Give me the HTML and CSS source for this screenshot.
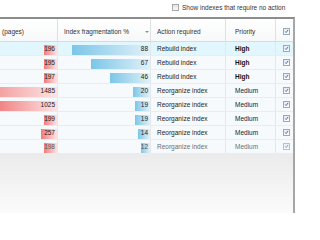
FILE: index.html
```html
<!DOCTYPE html>
<html>
<head>
<meta charset="utf-8">
<link rel="stylesheet" href="styles.css">
</head>
<body>
<div class="toolbar">
  <span class="cb cb-off"></span>
  <span class="toolbar-label">Show indexes that require no action</span>
</div>
<div class="grid">
  <div class="row head">
    <div class="cell c1">(pages)</div>
    <div class="cell c2">Index fragmentation %<span class="sort"></span></div>
    <div class="cell c3">Action required</div>
    <div class="cell c4">Priority</div>
    <div class="cell c5"><span class="cb cb-on"><svg viewBox="0 0 7 7"><path d="M1.6 3.4 L3 5 L5.6 1.4"/></svg></span></div>
  </div>
  <div class="row hl">
    <div class="cell c1 num red" style="--w:13px">196</div>
    <div class="cell c2 num blue" style="--w:78px">88</div>
    <div class="cell c3">Rebuild index</div>
    <div class="cell c4 high">High</div>
    <div class="cell c5"><span class="cb cb-on"><svg viewBox="0 0 7 7"><path d="M1.6 3.4 L3 5 L5.6 1.4"/></svg></span></div>
  </div>
  <div class="row">
    <div class="cell c1 num red" style="--w:13px">195</div>
    <div class="cell c2 num blue" style="--w:59px">67</div>
    <div class="cell c3">Rebuild index</div>
    <div class="cell c4 high">High</div>
    <div class="cell c5"><span class="cb cb-on"><svg viewBox="0 0 7 7"><path d="M1.6 3.4 L3 5 L5.6 1.4"/></svg></span></div>
  </div>
  <div class="row">
    <div class="cell c1 num red" style="--w:13px">197</div>
    <div class="cell c2 num blue" style="--w:40px">46</div>
    <div class="cell c3">Rebuild index</div>
    <div class="cell c4 high">High</div>
    <div class="cell c5"><span class="cb cb-on"><svg viewBox="0 0 7 7"><path d="M1.6 3.4 L3 5 L5.6 1.4"/></svg></span></div>
  </div>
  <div class="row">
    <div class="cell c1 num red" style="--w:91px">1485</div>
    <div class="cell c2 num blue" style="--w:17px">20</div>
    <div class="cell c3">Reorganize index</div>
    <div class="cell c4">Medium</div>
    <div class="cell c5"><span class="cb cb-on"><svg viewBox="0 0 7 7"><path d="M1.6 3.4 L3 5 L5.6 1.4"/></svg></span></div>
  </div>
  <div class="row">
    <div class="cell c1 num red" style="--w:63px">1025</div>
    <div class="cell c2 num blue" style="--w:15px">19</div>
    <div class="cell c3">Reorganize index</div>
    <div class="cell c4">Medium</div>
    <div class="cell c5"><span class="cb cb-on"><svg viewBox="0 0 7 7"><path d="M1.6 3.4 L3 5 L5.6 1.4"/></svg></span></div>
  </div>
  <div class="row">
    <div class="cell c1 num red" style="--w:13px">199</div>
    <div class="cell c2 num blue" style="--w:15px">19</div>
    <div class="cell c3">Reorganize index</div>
    <div class="cell c4">Medium</div>
    <div class="cell c5"><span class="cb cb-on"><svg viewBox="0 0 7 7"><path d="M1.6 3.4 L3 5 L5.6 1.4"/></svg></span></div>
  </div>
  <div class="row">
    <div class="cell c1 num red" style="--w:16px">257</div>
    <div class="cell c2 num blue" style="--w:12px">14</div>
    <div class="cell c3">Reorganize index</div>
    <div class="cell c4">Medium</div>
    <div class="cell c5"><span class="cb cb-on"><svg viewBox="0 0 7 7"><path d="M1.6 3.4 L3 5 L5.6 1.4"/></svg></span></div>
  </div>
  <div class="row dim">
    <div class="cell c1 num red" style="--w:13px">198</div>
    <div class="cell c2 num blue" style="--w:9px">12</div>
    <div class="cell c3">Reorganize index</div>
    <div class="cell c4">Medium</div>
    <div class="cell c5"><span class="cb cb-on"><svg viewBox="0 0 7 7"><path d="M1.6 3.4 L3 5 L5.6 1.4"/></svg></span></div>
  </div>
  <div class="empty"></div>
</div>
</body>
</html>
```

FILE: styles.css
```css
html, body {
  margin: 0;
  padding: 0;
}
body {
  width: 300px;
  height: 213px;
  overflow: hidden;
  background: #ffffff;
  font-family: "Liberation Sans", Arial, sans-serif;
  font-size: 6.5px;
  color: #222222;
  display: flex;
  flex-direction: column;
}
.toolbar {
  height: 17px;
  box-sizing: border-box;
  display: flex;
  align-items: center;
  padding-left: 172px;
  padding-bottom: 2px;
  color: #333;
}
.toolbar-label {
  margin-left: 3px;
}
.grid {
  width: 295px;
  flex: 1;
  box-sizing: border-box;
  border-top: 2px solid #8c8c8c;
  border-right: 2px solid #a6a6a6;
  display: flex;
  flex-direction: column;
}
.row {
  display: grid;
  grid-template-columns: 58px 93px 75px 50px 17px;
  height: 14px;
  box-sizing: border-box;
  border-bottom: 1px solid #e7edf0;
  background: #f6fafc;
  line-height: 13px;
}
.row.hl {
  background: #e1f7fd;
}
.row.head {
  height: 23px;
  background: linear-gradient(#ffffff, #f7f8f9);
  border-bottom: 1px solid #d8dbde;
  color: #333;
}
.cell {
  box-sizing: border-box;
  border-right: 1px solid #e3e8eb;
  white-space: nowrap;
  overflow: hidden;
  display: flex;
  align-items: center;
  padding-left: 6px;
}
.head .cell {
  border-right-color: #dfe1e3;
  padding-top: 3px;
}
.head .c1 {
  padding-left: 2px;
}
.c4 {
  padding-left: 9px;
}
.c5 {
  border-right: none;
  padding-left: 7px;
}
.num {
  justify-content: flex-end;
  padding-left: 0;
  padding-right: 2px;
  background-repeat: no-repeat;
  background-position: right 0 top 3px;
  background-size: var(--w) 10px;
}
.red {
  background-image: linear-gradient(to right, #ef7b7b, #fde4e4);
}
.blue {
  background-image: linear-gradient(to right, #7cc6e8, #e2f1f9);
}
.high {
  font-weight: bold;
  color: #111;
}
.dim .cell {
  color: #6e6e6e;
}
.dim .num {
  color: #555;
}
.dim .cb {
  opacity: 0.7;
}
.sort {
  margin-left: auto;
  margin-right: 1px;
  width: 0;
  height: 0;
  border-left: 2px solid transparent;
  border-right: 2px solid transparent;
  border-top: 2px solid #8f8f8f;
}
.cb {
  width: 7px;
  height: 7px;
  box-sizing: border-box;
  display: inline-flex;
  flex: none;
}
.cb-off {
  border: 1px solid #a9a9a9;
  background: linear-gradient(#e4e4e4, #f7f7f7);
}
.cb-on {
  border: 1px solid #9aaabb;
  background: linear-gradient(#e3e9ef, #fbfcfd);
}
.cb svg {
  width: 5px;
  height: 5px;
  overflow: visible;
}
.cb svg path {
  fill: none;
  stroke: #2a4ea8;
  stroke-width: 1.1;
}
.empty {
  flex: 1;
  background: linear-gradient(#ebebeb, #fbfbfb);
}
```
